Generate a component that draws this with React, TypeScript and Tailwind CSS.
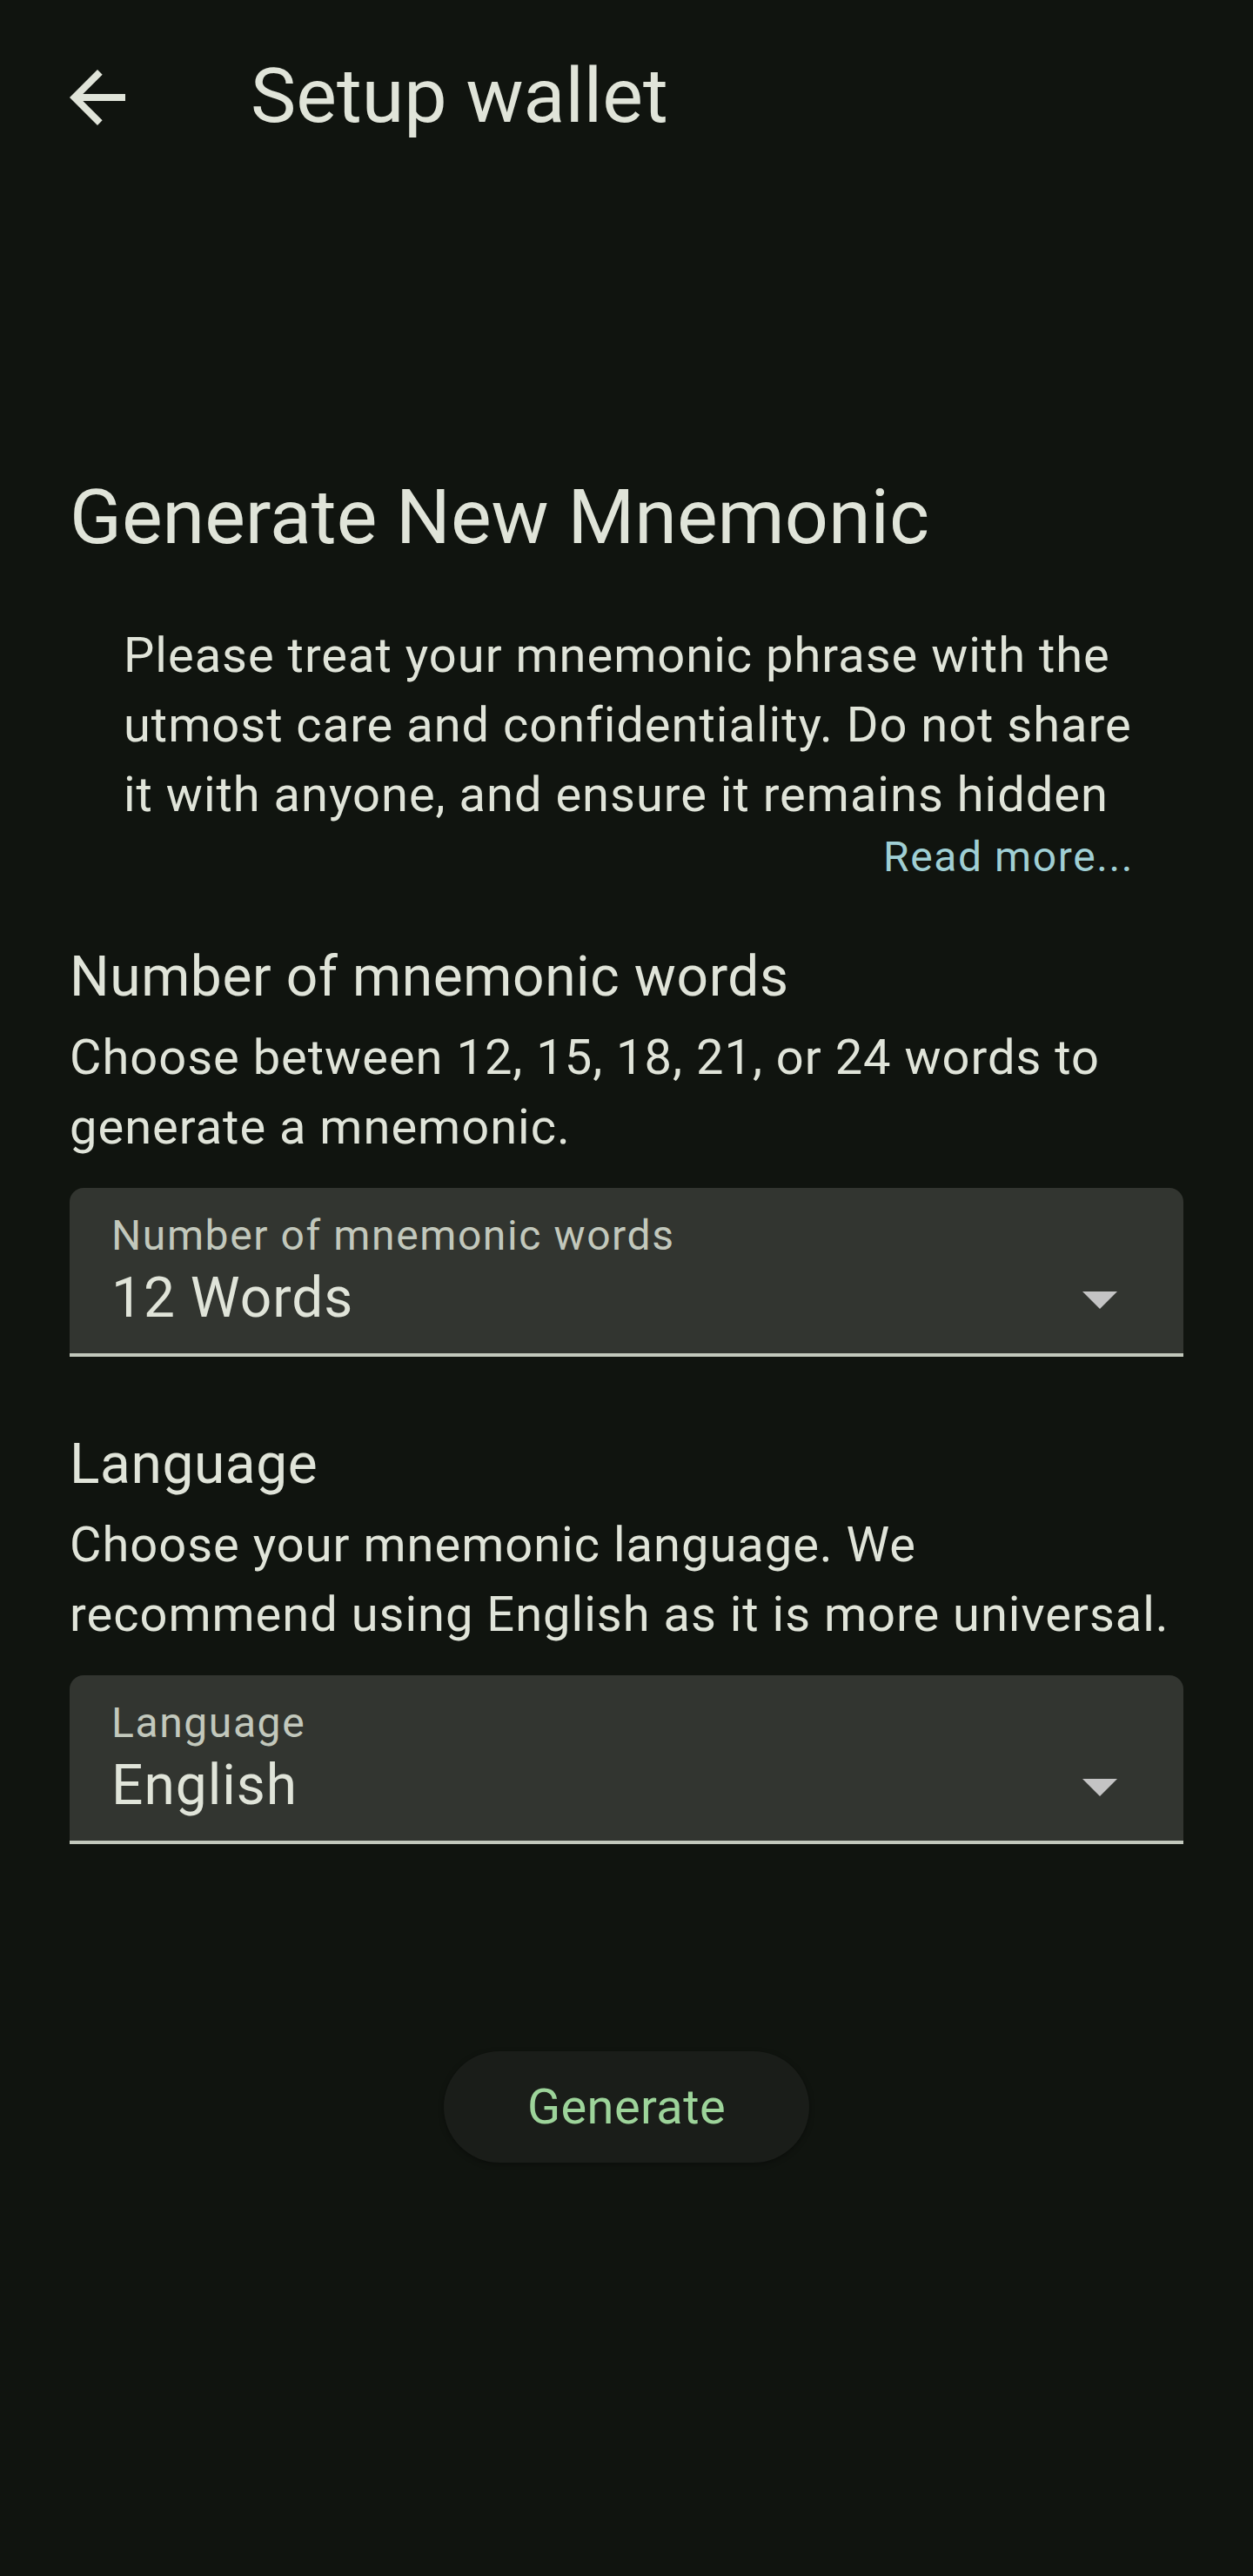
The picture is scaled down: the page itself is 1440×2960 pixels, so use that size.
import React from 'react';

const fieldOptions = {
  words: { label: 'Number of mnemonic words', value: '12 Words' },
  language: { label: 'Language', value: 'English' },
};

const DropdownField: React.FC<{ label: string; value: string }> = ({ label, value }) => {
  return (
    <div className="h-[194px] rounded-t-[16px] bg-[#323530] border-b-4 border-[#c2c8bc] pl-12 pr-12 pt-[27px]">
      <div className="text-[48px] leading-[56px] tracking-[1.6px] text-[#c2c8bc]">{label}</div>
      <div className="flex items-center justify-between h-[96px] -mt-1">
        <span className="text-[64px] leading-[64px] tracking-[1px] text-[#e0e4d9]">{value}</span>
        <svg viewBox="0 0 24 24" className="w-24 h-24 flex-shrink-0" fill="#c4c4c4">
          <path d="M7 10l5 5 5-5z" />
        </svg>
      </div>
    </div>
  );
};

const Section: React.FC<{ title: string; description: string; field: { label: string; value: string } }> = ({
  title,
  description,
  field,
}) => {
  return (
    <section>
      <h2 className="text-[64px] leading-[96px] tracking-[0.6px] text-[#e0e4d9] mb-1">{title}</h2>
      <p className="text-[56px] leading-[80px] tracking-[1px] text-[#e0e4d9]">{description}</p>
      <div className="mt-[30px]">
        <DropdownField label={field.label} value={field.value} />
      </div>
    </section>
  );
};

const App: React.FC = () => {
  return (
    <div className="min-h-[2960px] w-full bg-[#10140f] font-['Roboto',sans-serif] text-[#e0e4d9]">
      {/* Top app bar */}
      <header className="flex items-center h-[224px] pl-16">
        <svg viewBox="0 0 24 24" className="w-24 h-24 flex-shrink-0" fill="#e0e4d9">
          <path d="M20 11H7.83l5.59-5.59L12 4l-8 8 8 8 1.41-1.41L7.83 13H20v-2z" />
        </svg>
        <h1 className="ml-32 text-[88px] leading-[112px] mt-[-4px]">Setup wallet</h1>
      </header>

      <main className="px-20">
        <h1 className="mt-[314px] text-[88px] leading-[112px]">Generate New Mnemonic</h1>

        <div className="mt-[63px] pl-[62px] pr-[57px]">
          <p className="text-[56px] leading-[80px] tracking-[1px] -mr-4">
            Please treat your mnemonic phrase with the utmost care and confidentiality. Do not share it with
            anyone, and ensure it remains hidden
          </p>
          <div className="flex justify-end">
            <button className="text-[48px] leading-[64px] tracking-[1.6px] text-[#a0cfd4]">Read more...</button>
          </div>
        </div>

        <div className="mt-[58px] flex flex-col gap-[76px]">
          <Section
            title="Number of mnemonic words"
            description="Choose between 12, 15, 18, 21, or 24 words to generate a mnemonic."
            field={fieldOptions.words}
          />
          <Section
            title="Language"
            description="Choose your mnemonic language. We recommend using English as it is more universal."
            field={fieldOptions.language}
          />
        </div>

        <div className="flex justify-center mt-[238px]">
          <button className="w-[420px] h-[128px] rounded-full bg-[#1a1d19] shadow-[0_2px_6px_rgba(0,0,0,0.35)] text-[56px] leading-[80px] tracking-[0.4px] text-[#9dd49a]">
            Generate
          </button>
        </div>
      </main>
    </div>
  );
};

export default App;
